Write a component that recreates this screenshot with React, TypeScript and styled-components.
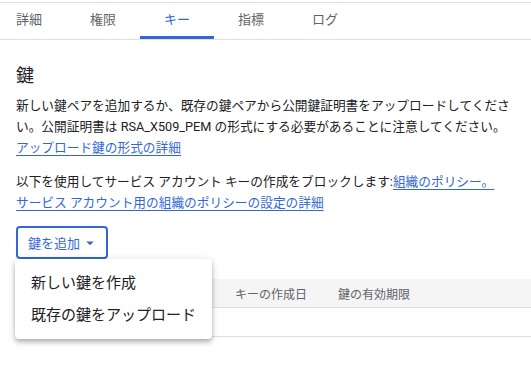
import React from "react";
import styled, { createGlobalStyle } from "styled-components";

const GlobalStyle = createGlobalStyle`
  body {
    margin: 0;
    background: #ffffff;
    font-family: Roboto, "Noto Sans CJK JP", sans-serif;
    color: #202124;
    overflow: hidden;
  }
`;

const tabs = ["詳細", "権限", "キー", "指標", "ログ"];

export default function App() {
  return (
    <Page>
      <GlobalStyle />
      <TabBar>
        {tabs.map((t) => (
          <Tab key={t} active={t === "キー"}>
            {t}
          </Tab>
        ))}
      </TabBar>
      <Content>
        <Heading>鍵</Heading>
        <Para>
          新しい鍵ペアを追加するか、既存の鍵ペアから公開鍵証明書をアップロードしてください。公開証明書は RSA_X509_PEM
          の形式にする必要があることに注意してください。
          <br />
          <Link href="#">アップロード鍵の形式の詳細</Link>
        </Para>
        <Para>
          以下を使用してサービス アカウント キーの作成をブロックします:
          <Link href="#">組織のポリシー。</Link>
          <br />
          <Link href="#">サービス アカウント用の組織のポリシーの設定の詳細</Link>
        </Para>
        <ButtonWrap>
          <AddButton>
            鍵を追加
            <svg width="18" height="18" viewBox="0 0 24 24">
              <path d="M7 10l5 5 5-5z" fill="#3367d6" />
            </svg>
          </AddButton>
          <Menu>
            <MenuItem>新しい鍵を作成</MenuItem>
            <MenuItem>既存の鍵をアップロード</MenuItem>
          </Menu>
        </ButtonWrap>
        <Table>
          <HeaderRow>
            <HeadCell />
            <HeadCell>キーの作成日</HeadCell>
            <HeadCell>鍵の有効期限</HeadCell>
          </HeaderRow>
          <BodyRow />
        </Table>
      </Content>
    </Page>
  );
}

const Page = styled.div`
  width: 531px;
  height: 367px;
  overflow: hidden;
`;

const TabBar = styled.div`
  display: flex;
  margin: 2px 0 0 -8px;
  border-top: 1px solid #e0e0e0;
  border-bottom: 1px solid #e0e0e0;
`;

const Tab = styled.div<{ active?: boolean }>`
  position: relative;
  height: 36px;
  line-height: 34px;
  padding: 0 24px;
  font-size: 13px;
  color: ${(p) => (p.active ? "#3367d6" : "#5f6368")};
  &::after {
    content: "";
    position: absolute;
    left: 0;
    right: 0;
    bottom: 0;
    height: 3px;
    background: ${(p) => (p.active ? "#3367d6" : "transparent")};
  }
`;

const Content = styled.div`
  padding: 0 16px;
`;

const Heading = styled.h2`
  margin: 24px 0 7px;
  font-size: 18px;
  font-weight: 400;
  line-height: 24px;
`;

const Para = styled.p`
  margin: 0 0 13px;
  font-size: 12.7px;
  line-height: 21px;
`;

const Link = styled.a`
  color: #3367d6;
  text-decoration: underline;
  text-underline-offset: 3px;
`;

const ButtonWrap = styled.div`
  position: relative;
  margin-top: 13px;
`;

const AddButton = styled.button`
  display: inline-flex;
  align-items: center;
  height: 33px;
  padding: 0 7px 0 10px;
  border: 2px solid #3367d6;
  border-radius: 4px;
  background: #ffffff;
  font-family: inherit;
  font-size: 13px;
  color: #3367d6;
  gap: 1px;
`;

const Menu = styled.div`
  position: absolute;
  left: -1px;
  top: 33px;
  z-index: 2;
  padding: 8px 0;
  background: #ffffff;
  border-radius: 4px;
  box-shadow: 0 2px 4px -1px rgba(0, 0, 0, 0.2), 0 4px 5px 0 rgba(0, 0, 0, 0.14),
    0 1px 10px 0 rgba(0, 0, 0, 0.12);
`;

const MenuItem = styled.div`
  height: 32px;
  line-height: 32px;
  padding: 0 16px;
  font-size: 15px;
  color: #202124;
  white-space: nowrap;
`;

const Table = styled.div`
  margin: 20px -16px 0 0;
`;

const HeaderRow = styled.div`
  display: grid;
  grid-template-columns: 219px 103px 1fr;
  height: 28px;
  align-items: center;
  background: #f5f5f5;
  border-bottom: 1px solid #e0e0e0;
`;

const HeadCell = styled.div`
  font-size: 12px;
  color: #5f6368;
`;

const BodyRow = styled.div`
  height: 28px;
  border-bottom: 1px solid #e0e0e0;
`;
